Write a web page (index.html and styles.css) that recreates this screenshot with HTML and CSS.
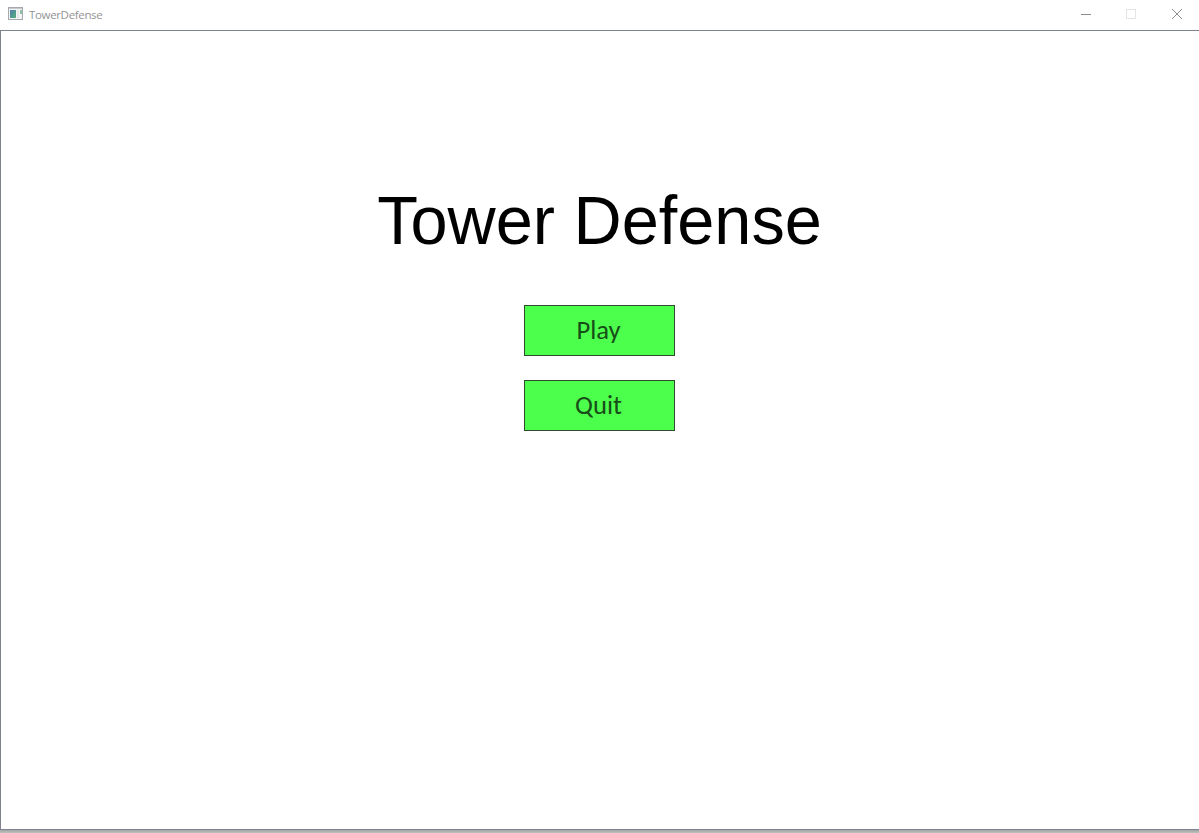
FILE: index.html
```html
<!DOCTYPE html>
<html lang="en">
<head>
<meta charset="utf-8">
<title>TowerDefense</title>
<link rel="stylesheet" href="styles.css">
</head>
<body>
<div class="window">
  <header class="titlebar">
    <svg class="app-icon" width="15" height="13" viewBox="0 0 15 13">
      <defs><linearGradient id="pane" x1="0" y1="0" x2="1" y2="1"><stop offset="0" stop-color="#4f7fae"/><stop offset="1" stop-color="#55b078"/></linearGradient></defs>
      <rect x="0.5" y="0.5" width="14" height="12" fill="#f4f4f4" stroke="#a5a9ae"/>
      <rect x="1" y="1" width="13" height="1" fill="#c5c9ce"/>
      <rect x="2" y="3" width="6" height="8" fill="url(#pane)"/>
      <rect x="9" y="3" width="2" height="8" fill="#e6e8ea"/>
      <rect x="12" y="3" width="2" height="4" fill="#8fbfa4"/>
    </svg>
    <span class="window-title">TowerDefense</span>
    <div class="controls">
      <svg width="46" height="30" viewBox="0 0 46 30"><path d="M18 14.5h10" stroke="#8c8c8c"/></svg>
      <svg width="45" height="30" viewBox="0 0 45 30"><rect x="17.5" y="9.5" width="9" height="9" fill="none" stroke="#e4e4e4"/></svg>
      <svg width="45" height="30" viewBox="0 0 45 30"><path d="M18 9l10 10M28 9l-10 10" stroke="#8c8c8c"/></svg>
    </div>
  </header>
  <main class="scene">
    <h1 class="game-title">Tower Defense</h1>
    <button class="menu-button">Play</button>
    <button class="menu-button">Quit</button>
  </main>
  <div class="window-shadow"></div>
</div>
</body>
</html>
```
FILE: styles.css
```css
body { margin: 0; }
.window { display: flex; flex-direction: column; width: 1199px; height: 833px; background: #fff; }
.window-shadow { height: 3px; flex: none; background: linear-gradient(#a3a5a5, #bfc1bd); }
.titlebar { display: flex; height: 30px; flex: none; align-items: center; }
.app-icon { margin: 0 6px 3px 8px; }
.window-title { font: 11.5px/28px "Open Sans", sans-serif; letter-spacing: -0.34px; color: #949494; }
.controls { display: flex; margin-left: auto; }
.scene { display: flex; flex: 1; flex-direction: column; align-items: center; padding-right: 1px; border: 1px solid #7f838f; border-right: 0; }
.game-title { margin: 152px 0 47px; font: 400 66.67px/75px "Liberation Sans", sans-serif; color: #000; transform: scaleY(1.035); }
.menu-button { width: 151px; height: 51px; margin: 0 0 24px; padding: 0 2px 0 0; border: 1px solid #2f4a2f; background: #4dff4d; color: #174d17; font: 26.67px/49px Carlito, Lato, sans-serif; }
```
